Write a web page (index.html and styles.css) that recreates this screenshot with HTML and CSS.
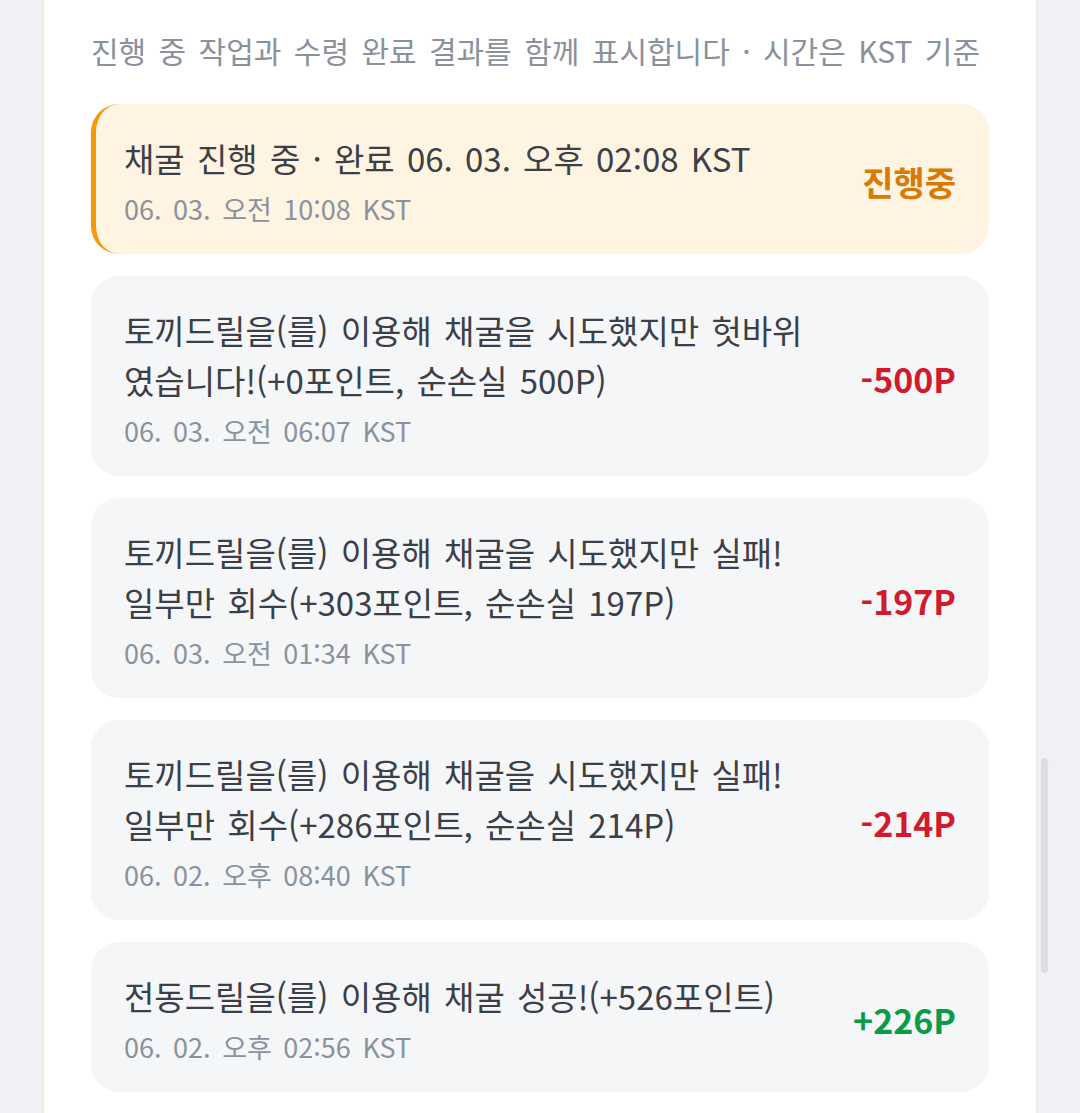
FILE: index.html
```html
<!DOCTYPE html>
<html lang="ko">
<head>
<meta charset="utf-8">
<link rel="stylesheet" href="styles.css">
</head>
<body>
<div class="page">
  <section class="card">
    <p class="subtitle">진행 중 작업과 수령 완료 결과를 함께 표시합니다 · 시간은 KST 기준</p>
    <ul class="list">
      <li class="row ongoing">
        <div class="body">
          <p class="title">채굴 진행 중 · 완료 06. 03. 오후 02:08 KST</p>
          <p class="time">06. 03. 오전 10:08 KST</p>
        </div>
        <span class="amt amt-pending">진행중</span>
      </li>
      <li class="row">
        <div class="body">
          <p class="title">토끼드릴을(를) 이용해 채굴을 시도했지만 헛바위였습니다!(+0포인트, 순손실 500P)</p>
          <p class="time">06. 03. 오전 06:07 KST</p>
        </div>
        <span class="amt amt-loss">-500P</span>
      </li>
      <li class="row">
        <div class="body">
          <p class="title">토끼드릴을(를) 이용해 채굴을 시도했지만 실패! 일부만 회수(+303포인트, 순손실 197P)</p>
          <p class="time">06. 03. 오전 01:34 KST</p>
        </div>
        <span class="amt amt-loss">-197P</span>
      </li>
      <li class="row">
        <div class="body">
          <p class="title">토끼드릴을(를) 이용해 채굴을 시도했지만 실패! 일부만 회수(+286포인트, 순손실 214P)</p>
          <p class="time">06. 02. 오후 08:40 KST</p>
        </div>
        <span class="amt amt-loss">-214P</span>
      </li>
      <li class="row">
        <div class="body">
          <p class="title">전동드릴을(를) 이용해 채굴 성공!(+526포인트)</p>
          <p class="time">06. 02. 오후 02:56 KST</p>
        </div>
        <span class="amt amt-gain">+226P</span>
      </li>
    </ul>
  </section>
  <div class="scroll-thumb"></div>
</div>
</body>
</html>
```

FILE: styles.css
```css
* { box-sizing: border-box; }

html, body {
  margin: 0;
  padding: 0;
  height: 100%;
  overflow: hidden;
  background: #eff1f5;
}

body {
  font-family: "Noto Sans CJK KR", "Noto Sans", sans-serif;
  color: #3a3f47;
}

.page {
  position: relative;
  height: 100%;
}

.card {
  margin: 0 42px;
  background: #ffffff;
  border-left: 2px solid #f5ebdc;
  border-right: 2px solid #f5ebdc;
  padding: 30px 47px 40px;
  min-height: 1200px;
}

.subtitle {
  margin: 0 0 34px;
  font-size: 30px;
  line-height: 40px;
  word-spacing: 4px;
  color: #8a919b;
  white-space: nowrap;
}

.list {
  list-style: none;
  margin: 0;
  padding: 0;
  display: flex;
  flex-direction: column;
  gap: 22px;
}

.row {
  display: flex;
  align-items: center;
  gap: 45px;
  padding: 29px 33px 28px 33px;
  background: #f5f6f8;
  border-radius: 28px;
}

.row.ongoing {
  background: #fff3e1;
  border-left: 5px solid #f39a0c;
  padding-left: 28px;
}

.body {
  flex: 1;
  min-width: 0;
}

.title {
  margin: 0;
  font-size: 33px;
  line-height: 50px;
  word-spacing: 3px;
  color: #3b4048;
}

.time {
  margin: 9px 0 0;
  font-size: 27px;
  line-height: 34px;
  word-spacing: 4px;
  color: #8a929d;
}

.amt {
  flex: none;
  font-size: 34px;
  font-weight: 700;
  line-height: 44px;
  margin-top: 4px;
}

.amt-pending { color: #d97a06; }
.amt-loss { color: #d11a2e; }
.amt-gain { color: #0b9a48; }

.scroll-thumb {
  position: absolute;
  left: 1041px;
  top: 758px;
  width: 7px;
  height: 215px;
  border-radius: 4px;
  background: #dcdee2;
}
```
